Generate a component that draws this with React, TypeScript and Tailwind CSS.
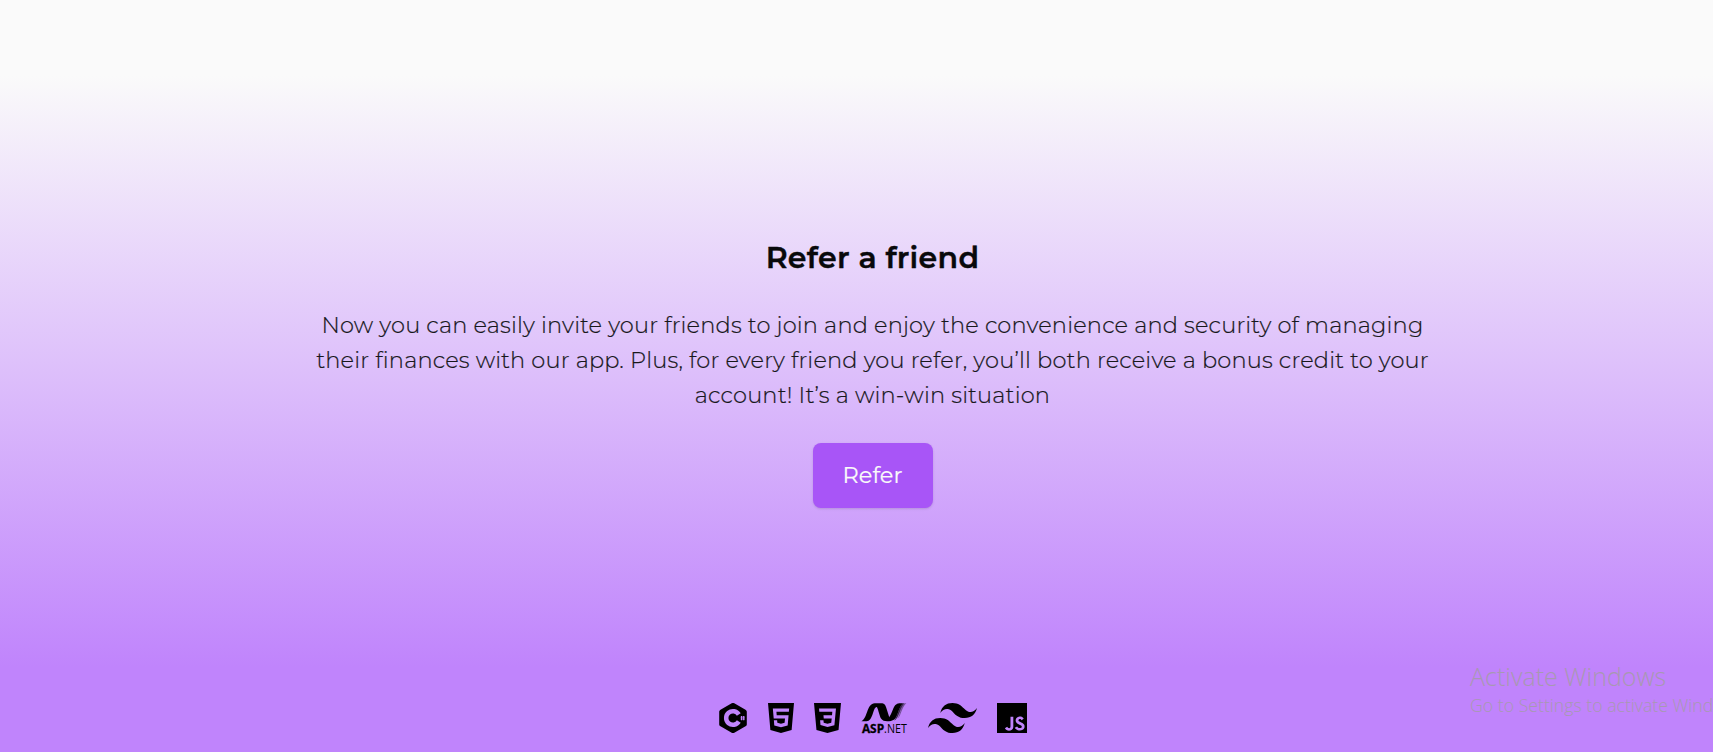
const lines = [
  "Now you can easily invite your friends to join and enjoy the convenience and security of managing",
  "their finances with our app. Plus, for every friend you refer, you’ll both receive a bonus credit to your",
  "account! It’s a win-win situation",
];

function CSharp() {
  return (
    <svg className="h-[30px] w-[30px]" viewBox="0 0 30 30" aria-label="C#">
      <path d="M13.7.35a2.6 2.6 0 0 1 2.6 0l11.2 6.3c.8.45 1.3 1.2 1.3 2.1v12.5c0 .9-.5 1.65-1.3 2.1l-11.2 6.3a2.6 2.6 0 0 1-2.6 0L2.5 23.35c-.8-.45-1.3-1.2-1.3-2.1V8.75c0-.9.5-1.65 1.3-2.1z" />
      <path d="M20.8 11.500A6.8 6.8 0 1 0 20.8 18.500" fill="none" stroke="#c084fc" strokeWidth="4.5" />
      <path d="M23.6 12.9v4.400M25.700 12.9v4.400" fill="none" stroke="#c084fc" strokeWidth="1.2" />
      <path d="M22.300 14.200h4.700M22.300 16h4.700" fill="none" stroke="#c084fc" strokeWidth=".6" />
    </svg>
  );
}

function Html5() {
  return (
    <svg className="h-[30px] w-[26px]" viewBox="1.5 0 21 24" preserveAspectRatio="none" aria-label="HTML5">
      <path d="M1.5 0h21l-1.91 21.563L11.977 24l-8.564-2.438L1.5 0zm7.031 9.75l-.232-2.718 10.059.003.23-2.622L5.412 4.41l.698 8.01h9.126l-.326 3.426-2.91.804-2.955-.81-.188-2.11H6.248l.33 4.171L12 19.351l5.379-1.443.744-8.157H8.531z" />
    </svg>
  );
}

function Css3() {
  return (
    <svg className="h-[30px] w-[27px]" viewBox="1.5 0 21 24" preserveAspectRatio="none" aria-label="CSS3">
      <path d="M1.5 0h21l-1.91 21.563L11.977 24l-8.565-2.438L1.5 0zm17.09 4.413L5.41 4.41l.213 2.622 10.125.002-.255 2.716h-6.64l.24 2.573h6.182l-.366 3.523-2.91.804-2.956-.81-.188-2.11h-2.61l.29 3.855L12 19.288l5.373-1.53L18.59 4.414z" />
    </svg>
  );
}

function AspNet() {
  return (
    <svg className="h-[30px] w-[46px] overflow-visible" viewBox="0 0 46 30" aria-label="ASP.NET">
      <path d="M.4 18.2C3.600 16.5 5 12 6.600 7.500 8.600 2 11.100.2 15.100.2H20C23.500.2 24.500 2 25.500 5.500L28.500 15C28.900 16.500 29.300 17.300 30 17.900 26 18.500 22 18.600 20 15.500 18.500 13 17.500 7 16 4.200 14.500 3.600 13.300 6 12 10 10.300 15.500 8.500 18.200 5.500 18.200Z" />
      <path d="M26.600 15.800C29.500 13.500 30.600 9.500 32.300 5.500 34 1.500 36 .2 39.500.2H42C39 3 38 7 36.500 11 34.700 16 32.500 18 28.500 18Z" />
      <path d="M42 .2h1.400C40.500 3.400 39 9 37.200 12.700c-1 2.300-2.400 4.200-4 4.900 2-2.800 3-6 4.200-9.400C38.600 4.700 40 1.500 42 .2z" opacity=".7" />
      <path d="M43.600.2H45.400c-3 2.200-4.600 8-6.500 12.200-.6 1.300-1.400 2.400-2.300 3.200C39 10.500 40.300 3 43.600.2z" opacity=".4" />
      <text x="0.900" y="30" fontFamily="'Open Sans', sans-serif" fontSize="11.700" fontWeight="700" stroke="#000" strokeWidth=".3" textLength="22.2" lengthAdjust="spacingAndGlyphs">ASP</text>
      <text x="23.100" y="30" fontFamily="'Open Sans', sans-serif" fontSize="11.700" textLength="22.700" lengthAdjust="spacingAndGlyphs">.NET</text>
    </svg>
  );
}

function TailwindMark() {
  return (
    <svg className="ml-px h-[30px] w-[49px]" viewBox="0 4.8 24 14.4" preserveAspectRatio="none" aria-label="Tailwind CSS">
      <path d="M12.001,4.8c-3.2,0-5.2,1.6-6,4.8c1.2-1.6,2.6-2.2,4.2-1.8c0.913,0.228,1.565,0.89,2.288,1.624C13.666,10.618,15.027,12,18.001,12c3.2,0,5.2-1.6,6-4.8c-1.2,1.6-2.6,2.2-4.2,1.8c-0.913-0.228-1.565-0.89-2.288-1.624C16.337,6.182,14.976,4.8,12.001,4.8z M6.001,12c-3.2,0-5.2,1.6-6,4.8c1.2-1.6,2.6-2.2,4.2-1.8c0.913,0.228,1.565,0.89,2.288,1.624c1.177,1.194,2.538,2.576,5.512,2.576c3.2,0,5.2-1.6,6-4.8c-1.2,1.6-2.6,2.2-4.2,1.8c-0.913-0.228-1.565-0.89-2.288-1.624C10.337,13.382,8.976,12,6.001,12z" />
    </svg>
  );
}

function JavaScript() {
  return (
    <svg className="size-[30px]" viewBox="0 0 24 24" aria-label="JavaScript">
      <path d="M0 0h24v24H0V0zm22.034 18.276c-.175-1.095-.888-2.015-3.003-2.873-.736-.345-1.554-.585-1.797-1.14-.091-.33-.105-.51-.046-.705.15-.646.915-.84 1.515-.66.39.12.75.42.976.9 1.034-.676 1.034-.676 1.755-1.125-.27-.42-.404-.601-.586-.78-.63-.705-1.469-1.065-2.834-1.034l-.705.089c-.676.165-1.32.525-1.71 1.005-1.14 1.291-.811 3.541.569 4.471 1.365 1.02 3.361 1.244 3.616 2.205.24 1.17-.87 1.545-1.966 1.41-.811-.18-1.26-.586-1.755-1.336l-1.83 1.051c.21.48.45.689.81 1.109 1.74 1.756 6.09 1.666 6.871-1.004.029-.09.24-.705.074-1.65l.046.067zm-8.983-7.245h-2.248c0 1.938-.009 3.864-.009 5.805 0 1.232.063 2.363-.138 2.711-.33.689-1.18.601-1.566.48-.396-.196-.597-.466-.83-.855-.063-.105-.11-.196-.127-.196l-1.825 1.125c.305.63.75 1.172 1.324 1.517.855.51 2.004.675 3.207.405.783-.226 1.458-.691 1.811-1.411.51-.93.402-2.07.397-3.346.012-2.054 0-4.109 0-6.179l.004-.056z" />
    </svg>
  );
}

export default function App() {
  return (
    <div className="relative flex h-[752px] w-full flex-col overflow-hidden bg-[#fafafa] bg-linear-to-b/srgb from-[#fafafa] from-[76px] to-[#c084fc] to-[667px] pl-8 font-[Montserrat,Inter,sans-serif]">
      <main className="flex h-[667px] flex-col items-center pt-[238px]">
        <h2 className="text-[30px] leading-[40px] font-semibold tracking-[0.3px] whitespace-nowrap text-zinc-950 [-webkit-text-stroke:0.4px_#09090b]">Refer a friend</h2>
        <div className="mt-[30px] flex flex-col items-center text-[22.5px] leading-[35px] font-light tracking-[0.17px] text-zinc-900 [-webkit-text-stroke:0.2px_#18181b]">
          {lines.map((line) => (
            <p key={line} className="whitespace-nowrap">{line}</p>
          ))}
        </div>
        <button className="mt-[30px] flex h-[65px] w-[120px] items-center justify-center rounded-lg bg-[#a855f7] text-[22.5px] text-zinc-50 shadow-sm [-webkit-text-stroke:0.2px_#fafafa]">Refer</button>
      </main>
      <footer className="flex items-start justify-center gap-5 pt-9 text-black">
        <CSharp />
        <Html5 />
        <Css3 />
        <AspNet />
        <TailwindMark />
        <JavaScript />
      </footer>
      <aside className="absolute top-[660px] left-[1470px] font-['Open_Sans',sans-serif] font-light whitespace-nowrap text-[#a898b2]">
        <p className="text-[25px] leading-[32px]">Activate Windows</p>
        <p className="mt-px text-[17.700px] leading-[24px]">Go to Settings to activate Windows.</p>
      </aside>
    </div>
  );
}
